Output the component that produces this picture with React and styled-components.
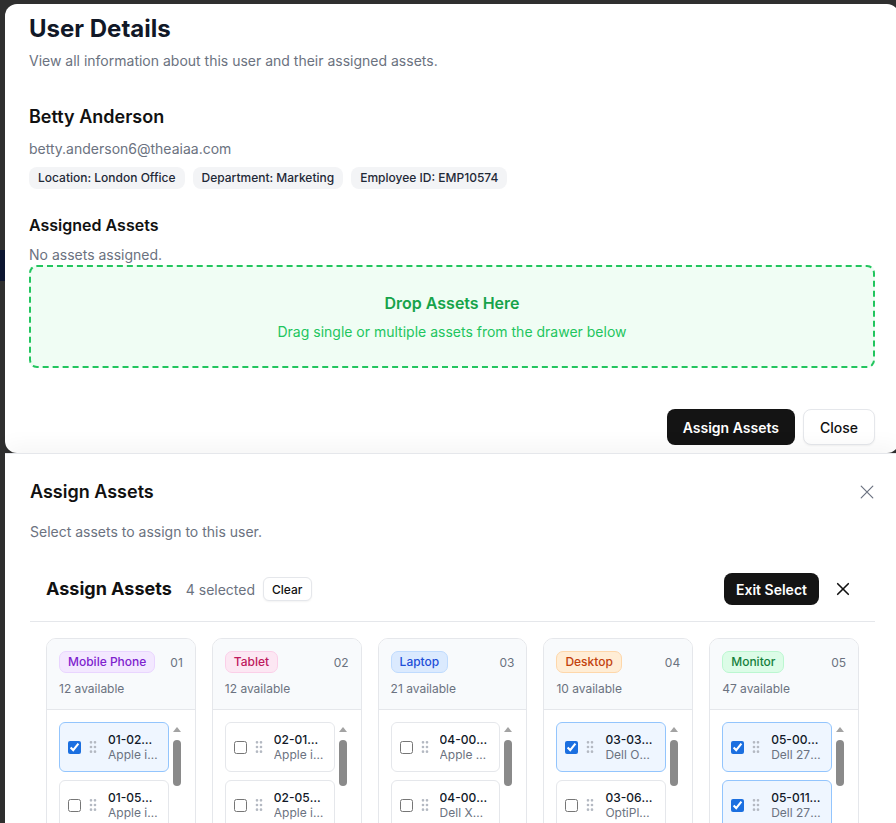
import React from "react";
import styled, { createGlobalStyle, css } from "styled-components";

const Global = createGlobalStyle`
  * { box-sizing: border-box; }
  html, body { margin: 0; padding: 0; }
  body {
    background: #2f2f2f;
    font-family: Inter, "Noto Sans", "Liberation Sans", sans-serif;
    overflow: hidden;
    -webkit-font-smoothing: antialiased;
  }
`;

const Screen = styled.div`
  display: flex;
  width: 896px;
  height: 823px;
  overflow: hidden;
`;

const Gutter = styled.div`
  flex: 0 0 5px;
  display: flex;
  flex-direction: column;
  padding-top: 250px;
`;

const PageBlock = styled.div`
  height: 31px;
  background: #0c1530;
`;

const Stack = styled.div`
  flex: 0 0 894px;
  display: flex;
  flex-direction: column;
  padding-top: 4px;
  min-height: 0;
`;

/* ---------- User details dialog ---------- */
const Dialog = styled.section`
  background: #fff;
  border-radius: 12px;
  padding: 9px 24px 8px;
  display: flex;
  flex-direction: column;
`;

const DialogTitle = styled.h1`
  margin: 0;
  font-size: 24px;
  line-height: 32px;
  font-weight: 700;
  color: #111827;
`;

const Muted = styled.p`
  margin: ${(p) => p.$mt || 0}px 0 0;
  font-size: 14px;
  line-height: 20px;
  color: #6b7280;
`;

const Name = styled.h2`
  margin: 32px 0 0;
  font-size: 18px;
  line-height: 28px;
  font-weight: 600;
  color: #111111;
`;

const ChipRow = styled.div`
  display: flex;
  gap: 8px;
  margin-top: 8px;
`;

const InfoChip = styled.span`
  display: inline-flex;
  align-items: center;
  height: 22px;
  padding: 0 9px;
  border-radius: 8px;
  background: #f3f4f6;
  color: #1f2937;
  font-size: 12px;
  font-weight: 500;
  line-height: 16px;
`;

const SectionTitle = styled.h3`
  margin: 24px 0 0;
  font-size: 16px;
  line-height: 24px;
  font-weight: 600;
  color: #111111;
`;

const DropZone = styled.div`
  border: 2px dashed #22c55e;
  border-radius: 8px;
  background: #f0fdf4;
  padding: 24px;
  display: flex;
  flex-direction: column;
  align-items: center;
  gap: 7px;
`;

const DropTitle = styled.div`
  font-size: 16px;
  line-height: 24px;
  font-weight: 600;
  color: #16a34a;
`;

const DropHint = styled.div`
  font-size: 14px;
  line-height: 20px;
  color: #22c55e;
`;

const Footer = styled.div`
  margin-top: 41px;
  display: flex;
  justify-content: flex-end;
  gap: 8px;
`;

const buttonBase = css`
  font-family: inherit;
  display: inline-flex;
  align-items: center;
  justify-content: center;
  cursor: pointer;
  white-space: nowrap;
`;

const DarkButton = styled.button`
  ${buttonBase};
  height: ${(p) => (p.$small ? 32 : 36)}px;
  padding: 0 ${(p) => (p.$small ? 12 : 16)}px;
  border: none;
  border-radius: 8px;
  background: #141414;
  color: #fff;
  font-size: 14px;
  font-weight: 600;
`;

const LightButton = styled.button`
  ${buttonBase};
  height: ${(p) => (p.$small ? 24 : 36)}px;
  padding: 0 ${(p) => (p.$small ? 8 : 16)}px;
  border: 1px solid #e5e7eb;
  border-radius: ${(p) => (p.$small ? 6 : 8)}px;
  background: #fff;
  color: #111;
  font-size: ${(p) => (p.$small ? 12 : 14)}px;
  font-weight: 500;
  box-shadow: 0 1px 2px rgba(0, 0, 0, 0.05);
`;

/* ---------- Assign drawer ---------- */
const Drawer = styled.section`
  flex: 1;
  min-height: 0;
  overflow: hidden;
  background: #fff;
  border-top: 1px solid #e5e7eb;
  padding: 24px 24px 0 25px;
  box-shadow: 0 -8px 20px rgba(0, 0, 0, 0.04);
`;

const DrawerHead = styled.div`
  display: flex;
  align-items: center;
  justify-content: space-between;
`;

const DrawerTitle = styled.h2`
  margin: 0;
  font-size: 18px;
  line-height: 28px;
  font-weight: 600;
  color: #111111;
`;

const IconButton = styled.button`
  border: none;
  background: transparent;
  padding: 0;
  width: ${(p) => p.$box}px;
  height: ${(p) => p.$box}px;
  display: inline-flex;
  align-items: center;
  justify-content: center;
  color: ${(p) => p.$color};
  cursor: pointer;
`;

const Panel = styled.div`
  margin-top: 15px;
`;

const Toolbar = styled.div`
  display: flex;
  align-items: center;
  justify-content: space-between;
  padding: 16px;
  border-bottom: 1px solid #e5e7eb;
`;

const ToolGroup = styled.div`
  display: flex;
  align-items: center;
  gap: ${(p) => p.$gap}px;
  height: 32px;
`;

const PanelTitle = styled.h3`
  margin: 0 6px 0 0;
  font-size: 18px;
  line-height: 28px;
  font-weight: 700;
  color: #111111;
`;

const Count = styled.span`
  font-size: 14px;
  color: #6b7280;
`;

const Board = styled.div`
  display: grid;
  grid-template-columns: repeat(5, 1fr);
  gap: 16px;
  padding: 16px;
`;

const Column = styled.div`
  border: 1px solid #e5e7eb;
  border-radius: 10px;
  overflow: hidden;
  background: #fff;
`;

const ColumnHead = styled.div`
  background: #f8fafc;
  padding: 12px;
  border-bottom: 1px solid #e5e7eb;
  display: flex;
  flex-direction: column;
  gap: 8px;
`;

const HeadTop = styled.div`
  display: flex;
  align-items: center;
  justify-content: space-between;
`;

const tones = {
  purple: ["#f3e8ff", "#e9d5ff", "#7e22ce"],
  pink: ["#fce7f3", "#fbcfe8", "#be185d"],
  blue: ["#dbeafe", "#bfdbfe", "#1d4ed8"],
  orange: ["#ffedd5", "#fed7aa", "#c2410c"],
  green: ["#dcfce7", "#bbf7d0", "#15803d"],
};

const TypeChip = styled.span`
  display: inline-flex;
  align-items: center;
  height: 22px;
  padding: 0 8px;
  border-radius: 7px;
  font-size: 12px;
  line-height: 16px;
  font-weight: 500;
  background: ${(p) => tones[p.$tone][0]};
  border: 1px solid ${(p) => tones[p.$tone][1]};
  color: ${(p) => tones[p.$tone][2]};
`;

const ColNum = styled.span`
  font-size: 12px;
  color: #6b7280;
`;

const Avail = styled.div`
  font-size: 12px;
  line-height: 16px;
  color: #6b7280;
`;

const ColumnBody = styled.div`
  display: flex;
  gap: 2px;
  padding: 12px;
`;

const CardList = styled.div`
  flex: 1;
  min-width: 0;
  display: flex;
  flex-direction: column;
  gap: 8px;
`;

const Card = styled.div`
  height: 50px;
  display: flex;
  align-items: center;
  padding: 0 10px 0 8px;
  border-radius: 6px;
  border: 1px solid ${(p) => (p.$selected ? "#93c5fd" : "#e5e7eb")};
  background: ${(p) => (p.$selected ? "#eff6ff" : "#fff")};
`;

const Check = styled.input`
  flex: 0 0 13px;
  width: 13px;
  height: 13px;
  margin: 0 4px 0 0;
  accent-color: #1b6fe0;
`;

const Grip = styled.span`
  flex: 0 0 16px;
  display: inline-flex;
  color: #b4b9c2;
  margin-right: 7px;
`;

const CardText = styled.div`
  flex: 1;
  min-width: 0;
  display: flex;
  flex-direction: column;
`;

const Line = styled.span`
  font-size: 12px;
  line-height: 15px;
  white-space: nowrap;
  overflow: hidden;
  text-overflow: ellipsis;
  font-weight: ${(p) => (p.$strong ? 500 : 400)};
  color: ${(p) => (p.$strong ? "#111827" : "#6b7280")};
`;

const Rail = styled.div`
  flex: 0 0 12px;
  display: flex;
  flex-direction: column;
  align-items: center;
`;

const RailArrow = styled.div`
  margin-top: 5px;
  width: 0;
  height: 0;
  border-left: 4px solid transparent;
  border-right: 4px solid transparent;
  border-bottom: 5px solid #a3a3a3;
`;

const RailThumb = styled.div`
  margin-top: 8px;
  width: 8px;
  height: 46px;
  border-radius: 4px;
  background: #8a8a8a;
`;

const CloseX = ({ size, span, stroke, width }) => {
  const a = (size - span) / 2;
  const b = size - a;
  return (
    <svg width={size} height={size} viewBox={`0 0 ${size} ${size}`} fill="none">
      <path
        d={`M${a} ${a}L${b} ${b}M${b} ${a}L${a} ${b}`}
        stroke={stroke}
        strokeWidth={width}
        strokeLinecap="round"
      />
    </svg>
  );
};

const GripIcon = () => (
  <svg width="16" height="16" viewBox="0 0 24 24" fill="none" stroke="currentColor" strokeWidth="2" strokeLinecap="round">
    <circle cx="9" cy="12" r="1" />
    <circle cx="9" cy="5" r="1" />
    <circle cx="9" cy="19" r="1" />
    <circle cx="15" cy="12" r="1" />
    <circle cx="15" cy="5" r="1" />
    <circle cx="15" cy="19" r="1" />
  </svg>
);

const columns = [
  {
    type: "Mobile Phone", tone: "purple", num: "01", avail: 12,
    items: [
      { code: "01-02456", name: "Apple iPhone 14", selected: true },
      { code: "01-05873", name: "Apple iPhone 13" },
    ],
  },
  {
    type: "Tablet", tone: "pink", num: "02", avail: 12,
    items: [
      { code: "02-01846", name: "Apple iPad Air" },
      { code: "02-05337", name: "Apple iPad Pro" },
    ],
  },
  {
    type: "Laptop", tone: "blue", num: "03", avail: 21,
    items: [
      { code: "04-00213", name: "Apple MacBook Pro" },
      { code: "04-00475", name: "Dell XPS 13" },
    ],
  },
  {
    type: "Desktop", tone: "orange", num: "04", avail: 10,
    items: [
      { code: "03-03092", name: "Dell OptiPlex 7090", selected: true },
      { code: "03-06148", name: "OptiPlex 5090" },
    ],
  },
  {
    type: "Monitor", tone: "green", num: "05", avail: 47,
    items: [
      { code: "05-00562", name: "Dell 27 Monitor", selected: true },
      { code: "05-01124", name: "Dell 27 UltraSharp", selected: true },
    ],
  },
];

export default function App() {
  return (
    <>
      <Global />
      <Screen>
        <Gutter>
          <PageBlock />
        </Gutter>
        <Stack>
          <Dialog>
            <DialogTitle>User Details</DialogTitle>
            <Muted $mt={6}>View all information about this user and their assigned assets.</Muted>
            <Name>Betty Anderson</Name>
            <Muted $mt={8}>betty.anderson6@theaiaa.com</Muted>
            <ChipRow>
              <InfoChip>Location: London Office</InfoChip>
              <InfoChip>Department: Marketing</InfoChip>
              <InfoChip>Employee ID: EMP10574</InfoChip>
            </ChipRow>
            <SectionTitle>Assigned Assets</SectionTitle>
            <Muted $mt={8}>No assets assigned.</Muted>
            <DropZone>
              <DropTitle>Drop Assets Here</DropTitle>
              <DropHint>Drag single or multiple assets from the drawer below</DropHint>
            </DropZone>
            <Footer>
              <DarkButton>Assign Assets</DarkButton>
              <LightButton>Close</LightButton>
            </Footer>
          </Dialog>

          <Drawer>
            <DrawerHead>
              <DrawerTitle>Assign Assets</DrawerTitle>
              <IconButton $box={16} $color="#6b7280" aria-label="Close">
                <CloseX size={16} span={11.6} stroke="#6b7280" width={1.2} />
              </IconButton>
            </DrawerHead>
            <Muted $mt={16}>Select assets to assign to this user.</Muted>

            <Panel>
              <Toolbar>
                <ToolGroup $gap={8}>
                  <PanelTitle>Assign Assets</PanelTitle>
                  <Count>4 selected</Count>
                  <LightButton $small>Clear</LightButton>
                </ToolGroup>
                <ToolGroup $gap={8}>
                  <DarkButton $small>Exit Select</DarkButton>
                  <IconButton $box={32} $color="#111" aria-label="Close selection">
                    <CloseX size={16} span={10.6} stroke="#111" width={1.6} />
                  </IconButton>
                </ToolGroup>
              </Toolbar>

              <Board>
                {columns.map((col) => (
                  <Column key={col.num}>
                    <ColumnHead>
                      <HeadTop>
                        <TypeChip $tone={col.tone}>{col.type}</TypeChip>
                        <ColNum>{col.num}</ColNum>
                      </HeadTop>
                      <Avail>{col.avail} available</Avail>
                    </ColumnHead>
                    <ColumnBody>
                      <CardList>
                        {col.items.map((it) => (
                          <Card key={it.code} $selected={!!it.selected}>
                            <Check type="checkbox" checked={!!it.selected} readOnly />
                            <Grip>
                              <GripIcon />
                            </Grip>
                            <CardText>
                              <Line $strong>{it.code}</Line>
                              <Line>{it.name}</Line>
                            </CardText>
                          </Card>
                        ))}
                      </CardList>
                      <Rail>
                        <RailArrow />
                        <RailThumb />
                      </Rail>
                    </ColumnBody>
                  </Column>
                ))}
              </Board>
            </Panel>
          </Drawer>
        </Stack>
      </Screen>
    </>
  );
}
